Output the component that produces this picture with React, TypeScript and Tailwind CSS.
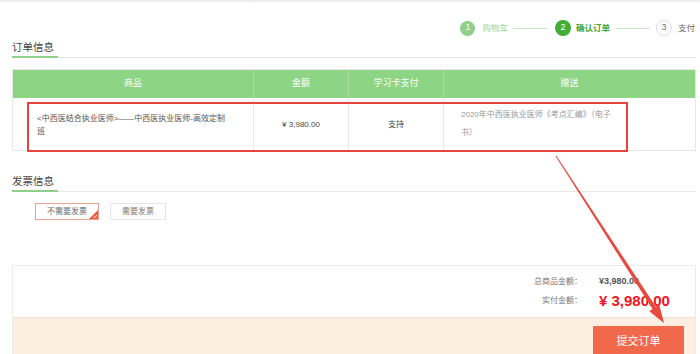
export default function App() {
  return (
    <div className="relative h-[354px] w-[700px] overflow-hidden bg-white font-['Liberation_Sans','Noto_Sans_CJK_SC',sans-serif] text-[#555]">
      <div className="h-[3px] bg-gradient-to-b from-[#e6e6e6] to-white" />

      {/* steps */}
      <div className="mt-[17px] flex h-4 items-center justify-end pr-[5px] text-[8.5px]">
        <span className="flex h-[15px] w-[15px] items-center justify-center rounded-full bg-[#8fd08a] text-[9px] text-white">1</span>
        <span className="ml-[7px] text-[#9fd59a]">购物车</span>
        <span className="ml-[5px] h-px w-[34px] bg-[#c9e8c5]" />
        <span className="ml-[8px] flex h-4 w-4 items-center justify-center rounded-full bg-[#43ae36] text-[9px] text-white">2</span>
        <span className="ml-[5px] font-bold text-[#3ea633]">确认订单</span>
        <span className="ml-[6px] h-px w-[34px] bg-[#c9e8c5]" />
        <span className="ml-[6px] flex h-4 w-4 items-center justify-center rounded-full border border-[#ddd] text-[9px] text-[#777]">3</span>
        <span className="ml-[6px] text-[#666]">支付</span>
      </div>

      <div className="ml-3 w-[684px]">
        {/* order info */}
        <div className="mt-[6px] flex h-4 items-end border-b border-[#e8e8e8]">
          <div className="-mb-px h-[17px] w-[46px] border-b-2 border-[#8fd08a] text-[10.5px] leading-[13px] text-[#444]">订单信息</div>
        </div>

        <div className="relative mt-[11px] border border-[#e8e8e8]">
          <div className="grid h-[28px] grid-cols-[240px_95px_95px_1fr] bg-[#8dd485] text-[9px] text-white">
            <div className="flex items-center justify-center">商品</div>
            <div className="flex items-center justify-center border-l border-[#a8e0a2]">金额</div>
            <div className="flex items-center justify-center border-l border-[#a8e0a2]">学习卡支付</div>
            <div className="flex items-center justify-center border-l border-[#a8e0a2]">赠送</div>
          </div>
          <div className="grid h-[52px] grid-cols-[240px_95px_95px_1fr] text-[8px]">
            <div className="flex items-center pl-6 pt-[2px] leading-[13px] text-[#555]">
              <span>&lt;中西医结合执业医师&gt;——中西医执业医师-高效定制<br />班</span>
            </div>
            <div className="flex items-center justify-center border-l border-[#e8e8e8] pt-[2px] text-[#444]">¥ 3,980.00</div>
            <div className="flex items-center justify-center border-l border-[#e8e8e8] pt-[2px] text-[#444]">支持</div>
            <div className="flex items-center border-l border-[#e8e8e8] pl-[17px] leading-[18px] text-[#999]">
              <span>2020年中西医执业医师《考点汇编》（电子<br />书）</span>
            </div>
          </div>
          <div className="absolute left-[14px] top-[32px] h-[50px] w-[601px] border-2 border-[#e8423f]" />
        </div>

        {/* invoice */}
        <div className="mt-[25px] flex h-4 items-end border-b border-[#e8e8e8]">
          <div className="-mb-px h-[16px] w-[46px] border-b-2 border-[#8fd08a] text-[10.5px] leading-[11px] text-[#444]">发票信息</div>
        </div>

        <div className="mt-[11px] flex gap-[11px] pl-[23px] text-[8px]">
          <div className="relative flex h-[17px] w-[64px] items-center justify-center border border-[#f3a18f] text-[#666]">
            不需要发票
            <svg className="absolute bottom-0 right-0" width="9" height="9" viewBox="0 0 9 9">
              <path d="M9 0 L9 9 L0 9 Z" fill="#f05b3f" />
              <path d="M4.5 6.6 L5.8 7.7 L7.8 5.2" stroke="white" strokeWidth="0.9" fill="none" />
            </svg>
          </div>
          <div className="flex h-[17px] w-[56px] items-center justify-center border border-[#e6e6e6] text-[#777]">需要发票</div>
        </div>

        {/* total */}
        <div className="mt-[45px] border-x border-t border-[#ebebeb]">
          <div className="flex h-[51px] flex-col justify-center gap-[4px] pt-px">
            <div className="flex items-center justify-end">
              <span className="text-[8px] text-[#777]">总商品金额：</span>
              <span className="ml-[17px] w-[96px] text-[9px] font-bold text-[#555]">¥3,980.00</span>
            </div>
            <div className="flex items-center justify-end">
              <span className="text-[8px] text-[#777]">实付金额：</span>
              <span className="ml-[17px] w-[96px] text-[15px] font-bold leading-[16px] text-[#f0141e]">¥ 3,980.00</span>
            </div>
          </div>
          <div className="flex h-[40px] justify-end border-t border-[#f4e0d2] bg-[#fdeee2] pr-[11px] pt-[8px]">
            <div className="flex h-[30px] w-[91px] items-center justify-center bg-[#f2684b] text-[11px] text-white">提交订单</div>
          </div>
        </div>
      </div>

      <svg className="pointer-events-none absolute left-0 top-0" width="700" height="354" viewBox="0 0 700 354">
        <polygon
          points="556.4,155.7 655.9,306.8 659.2,304.6 664,323 649.2,311.2 652.5,309 555.6,156.3"
          fill="#e84a3f"
        />
      </svg>
    </div>
  );
}
